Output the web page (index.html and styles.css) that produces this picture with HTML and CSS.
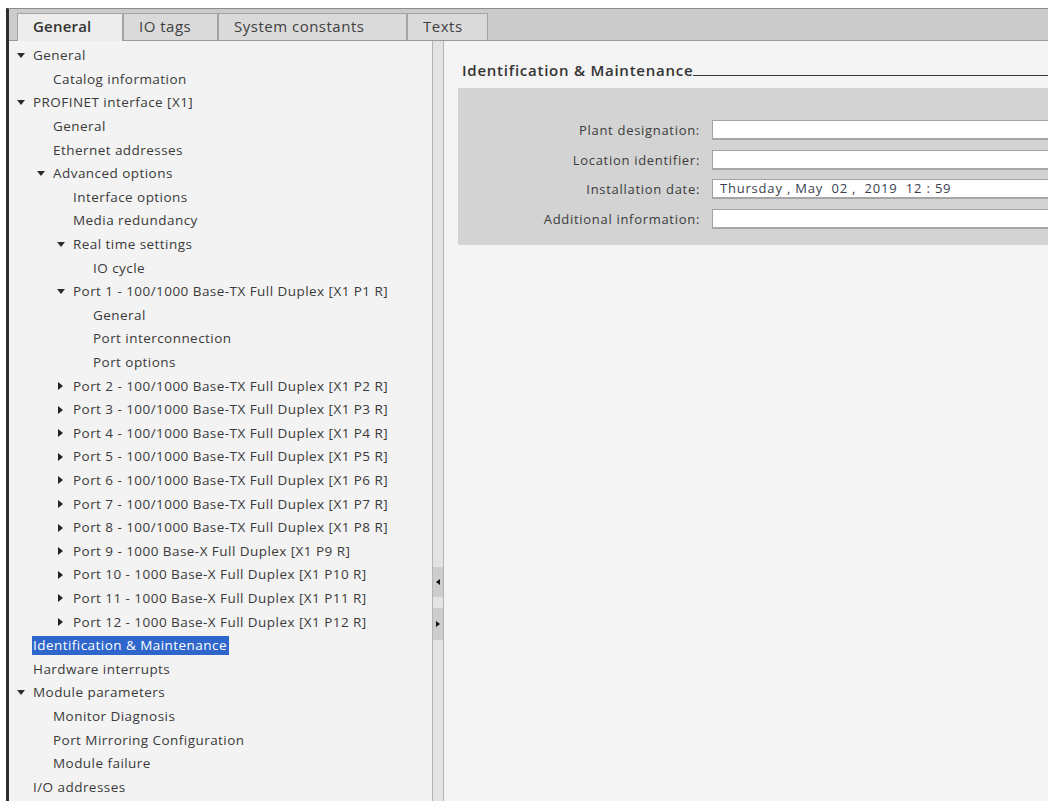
FILE: index.html
```html
<!DOCTYPE html>
<html lang="en">

<head>
    <meta charset="UTF-8">
    <title>Properties - General</title>
    <link rel="stylesheet" href="styles.css">
</head>

<body>
    <div class="window">
        <!-- tab strip -->
        <div class="tabs">
            <div class="tab active tab-general">General</div>
            <div class="tab tab-io">IO tags</div>
            <div class="tab tab-const">System constants</div>
            <div class="tab tab-texts">Texts</div>
        </div>

        <div class="body">
            <!-- navigation tree on the left -->
            <ul class="tree">
                <li class="lv0 open"><i></i><span>General</span></li>
                <li class="lv1"><i></i><span>Catalog information</span></li>
                <li class="lv0 open"><i></i><span>PROFINET interface [X1]</span></li>
                <li class="lv1"><i></i><span>General</span></li>
                <li class="lv1"><i></i><span>Ethernet addresses</span></li>
                <li class="lv1 open"><i></i><span>Advanced options</span></li>
                <li class="lv2"><i></i><span>Interface options</span></li>
                <li class="lv2"><i></i><span>Media redundancy</span></li>
                <li class="lv2 open"><i></i><span>Real time settings</span></li>
                <li class="lv3"><i></i><span>IO cycle</span></li>
                <li class="lv2 open"><i></i><span>Port 1 - 100/1000 Base-TX Full Duplex [X1 P1 R]</span></li>
                <li class="lv3"><i></i><span>General</span></li>
                <li class="lv3"><i></i><span>Port interconnection</span></li>
                <li class="lv3"><i></i><span>Port options</span></li>
                <li class="lv2 shut"><i></i><span>Port 2 - 100/1000 Base-TX Full Duplex [X1 P2 R]</span></li>
                <li class="lv2 shut"><i></i><span>Port 3 - 100/1000 Base-TX Full Duplex [X1 P3 R]</span></li>
                <li class="lv2 shut"><i></i><span>Port 4 - 100/1000 Base-TX Full Duplex [X1 P4 R]</span></li>
                <li class="lv2 shut"><i></i><span>Port 5 - 100/1000 Base-TX Full Duplex [X1 P5 R]</span></li>
                <li class="lv2 shut"><i></i><span>Port 6 - 100/1000 Base-TX Full Duplex [X1 P6 R]</span></li>
                <li class="lv2 shut"><i></i><span>Port 7 - 100/1000 Base-TX Full Duplex [X1 P7 R]</span></li>
                <li class="lv2 shut"><i></i><span>Port 8 - 100/1000 Base-TX Full Duplex [X1 P8 R]</span></li>
                <li class="lv2 shut"><i></i><span>Port 9 - 1000 Base-X Full Duplex [X1 P9 R]</span></li>
                <li class="lv2 shut"><i></i><span>Port 10 - 1000 Base-X Full Duplex [X1 P10 R]</span></li>
                <li class="lv2 shut"><i></i><span>Port 11 - 1000 Base-X Full Duplex [X1 P11 R]</span></li>
                <li class="lv2 shut"><i></i><span>Port 12 - 1000 Base-X Full Duplex [X1 P12 R]</span></li>
                <li class="lv0 current"><i></i><span>Identification &amp; Maintenance</span></li>
                <li class="lv0"><i></i><span>Hardware interrupts</span></li>
                <li class="lv0 open"><i></i><span>Module parameters</span></li>
                <li class="lv1"><i></i><span>Monitor Diagnosis</span></li>
                <li class="lv1"><i></i><span>Port Mirroring Configuration</span></li>
                <li class="lv1"><i></i><span>Module failure</span></li>
                <li class="lv0"><i></i><span>I/O addresses</span></li>
            </ul>

            <!-- splitter with collapse buttons -->
            <div class="splitter">
                <div class="split-btn"><b class="arr-left"></b></div>
                <div class="split-btn"><b class="arr-right"></b></div>
            </div>

            <!-- property page -->
            <div class="pane">
                <h3 class="section">Identification &amp; Maintenance</h3>
                <div class="group">
                    <label>Plant designation:</label>
                    <div class="field"></div>
                    <label>Location identifier:</label>
                    <div class="field"></div>
                    <label>Installation date:</label>
                    <div class="field date">Thursday , May  02 ,  2019  12 : 59</div>
                    <label>Additional information:</label>
                    <div class="field"></div>
                </div>
            </div>
        </div>
    </div>
</body>

</html>
```

FILE: styles.css
```css
* {
    padding: 0;
    margin: 0;
    list-style: none;
    box-sizing: border-box;
}

body {
    background: #fff;
    font-family: "Open Sans", "Liberation Sans", sans-serif;
    color: #3a3a3a;
    overflow: hidden;
    height: 801px;
}

.window {
    margin: 8px 0 0 6px;
    height: 793px;
    border-left: 3px solid #2e2e2e;
    border-top: 1px solid #8c8c8c;
    display: flex;
    flex-direction: column;
}

/* tabs */
.tabs {
    height: 32px;
    background: #cbcbcb;
    border-bottom: 1px solid #9a9a9a;
    padding-left: 8px;
    display: flex;
    align-items: flex-end;
}

.tab {
    height: 27px;
    line-height: 25px;
    padding-left: 15px;
    font-size: 15px;
    letter-spacing: 0.5px;
    color: #404040;
    background: #dadada;
    border: 1px solid #a4a4a4;
    border-bottom: 0;
}

.tab.active {
    height: 28px;
    margin-bottom: -1px;
    background: #ededed;
    font-weight: 600;
    color: #333;
    letter-spacing: 0.2px;
}

.tab-general { width: 106px; }
.tab-io { width: 95px; }
.tab-const { width: 189px; }
.tab-texts { width: 81px; }

.body {
    flex: 1;
    display: flex;
    min-height: 0;
}

/* tree */
.tree {
    width: 423px;
    background: #f3f3f3;
    padding-top: 3px;
    font-size: 13.5px;
    letter-spacing: 0.45px;
}

.tree li {
    height: 23.6px;
    display: flex;
    align-items: center;
    white-space: nowrap;
}

.tree li i {
    width: 16px;
    flex: none;
    display: flex;
    align-items: center;
}

.tree .lv0 { padding-left: 8px; }
.tree .lv1 { padding-left: 28px; }
.tree .lv2 { padding-left: 48px; }
.tree .lv3 { padding-left: 68px; }

.tree li.open i::before {
    content: "";
    border-left: 4px solid transparent;
    border-right: 4px solid transparent;
    border-top: 5px solid #2c2c2c;
}

.tree li.shut i::before {
    content: "";
    margin-left: 1px;
    border-top: 4px solid transparent;
    border-bottom: 4px solid transparent;
    border-left: 5px solid #222;
}

.tree li span {
    line-height: 17px;
    padding: 1px 2px 1px 1px;
    margin-left: -1px;
}

.tree li.current span {
    background: #2f66cb;
    color: #fff;
}

/* splitter */
.splitter {
    width: 12px;
    flex: none;
    background: #e3e3e3;
    border-left: 1px solid #b4b4b4;
    border-right: 1px solid #b4b4b4;
    padding-top: 526px;
}

.split-btn {
    height: 30px;
    background: #cdcdcd;
    margin-bottom: 11px;
    display: flex;
    align-items: center;
    justify-content: center;
}

.split-btn:last-child {
    height: 32px;
}

.arr-left {
    border-top: 3px solid transparent;
    border-bottom: 3px solid transparent;
    border-right: 4px solid #111;
}

.arr-right {
    border-top: 3px solid transparent;
    border-bottom: 3px solid transparent;
    border-left: 4px solid #111;
}

/* property page */
.pane {
    flex: 1;
    background: #f4f4f4;
    padding: 19px 0 0 14px;
    min-width: 0;
}

.section {
    display: flex;
    height: 20px;
    line-height: 20px;
    margin-left: 4px;
    font-size: 15px;
    font-weight: 600;
    letter-spacing: 0.75px;
    color: #333;
    white-space: nowrap;
}

.section::after {
    content: "";
    flex: 1;
    border-bottom: 1px solid #3a3a3a;
    margin-bottom: 4px;
}

.group {
    margin-top: 8px;
    height: 157px;
    background: #d3d3d3;
    padding: 32px 0 0 0;
    display: grid;
    grid-template-columns: 242px 1fr;
    grid-auto-rows: 20px;
    column-gap: 12px;
    row-gap: 9.5px;
}

.group label {
    text-align: right;
    font-size: 13px;
    letter-spacing: 0.7px;
    line-height: 20px;
    color: #3c3c3c;
}

.field {
    background: #fff;
    border-top: 1px solid #a2a2a2;
    border-left: 1px solid #a2a2a2;
    border-bottom: 2px solid #a6a6a6;
}

.field.date {
    white-space: pre;
    font-size: 13px;
    letter-spacing: 0.8px;
    line-height: 17px;
    padding-left: 7px;
    color: #3a3f52;
}
```
